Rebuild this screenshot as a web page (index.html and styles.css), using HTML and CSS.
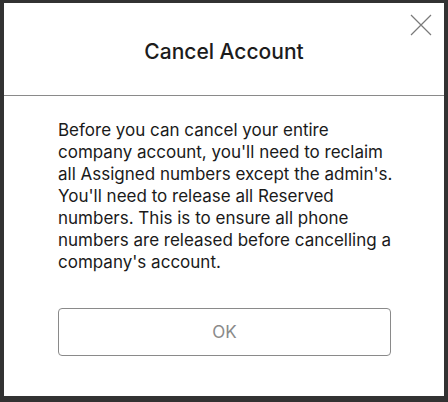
FILE: index.html
```html
<!DOCTYPE html>
<html lang="en">
<head>
    <meta charset="UTF-8">
    <meta name="viewport" content="width=device-width, initial-scale=1.0">
    <title>Cancel Account</title>
    <link rel="stylesheet" href="styles.css">
</head>
<body>
    <div class="modal">
        <!-- Header -->
        <div class="modal-header">
            <h1>Cancel Account</h1>
            <button class="close-btn" aria-label="Close">
                <svg width="22" height="22" viewBox="0 0 22 22">
                    <path d="M1 1 L21 21 M21 1 L1 21" stroke="#7a7a7a" stroke-width="1.2" fill="none"/>
                </svg>
            </button>
        </div>

        <!-- Body -->
        <div class="modal-body">
            <p>Before you can cancel your entire<br>
            company account, you'll need to reclaim<br>
            all Assigned numbers except the admin's.<br>
            You'll need to release all Reserved<br>
            numbers. This is to ensure all phone<br>
            numbers are released before cancelling a<br>
            company's account.</p>
            <button class="ok-btn">OK</button>
        </div>
    </div>
</body>
</html>
```

FILE: styles.css
```css
body {
    margin: 0;
    padding: 3px 0 0 4px;
    background-color: #323232;
    font-family: 'Inter', 'Liberation Sans', sans-serif;
    height: 402px;
    box-sizing: border-box;
    overflow: hidden;
}

.modal {
    background-color: #fff;
    width: 440px;
    height: 393px;
    display: flex;
    flex-direction: column;
}

.modal-header {
    position: relative;
    height: 92px;
    border-bottom: 1px solid #8a8a8a;
    display: flex;
    justify-content: center;
    align-items: center;
}

.modal-header h1 {
    margin: 4px 0 0 0;
    font-size: 21px;
    font-weight: 500;
    color: #1c1c1c;
}

.close-btn {
    position: absolute;
    top: 11px;
    right: 12px;
    background: none;
    border: none;
    padding: 0;
    cursor: pointer;
}

.modal-body {
    padding: 23px 53px 0 54px;
    display: flex;
    flex-direction: column;
}

.modal-body p {
    margin: 0 -30px 0 0;
    font-size: 17px;
    line-height: 22px;
    color: #1a1a1a;
    white-space: nowrap;
}

.ok-btn {
    margin-top: 35px;
    height: 48px;
    background-color: #fff;
    border: 1px solid #8a8a8a;
    border-radius: 4px;
    color: #8a8a8a;
    font-family: 'Inter', 'Liberation Sans', sans-serif;
    font-size: 17px;
    cursor: pointer;
}
```
